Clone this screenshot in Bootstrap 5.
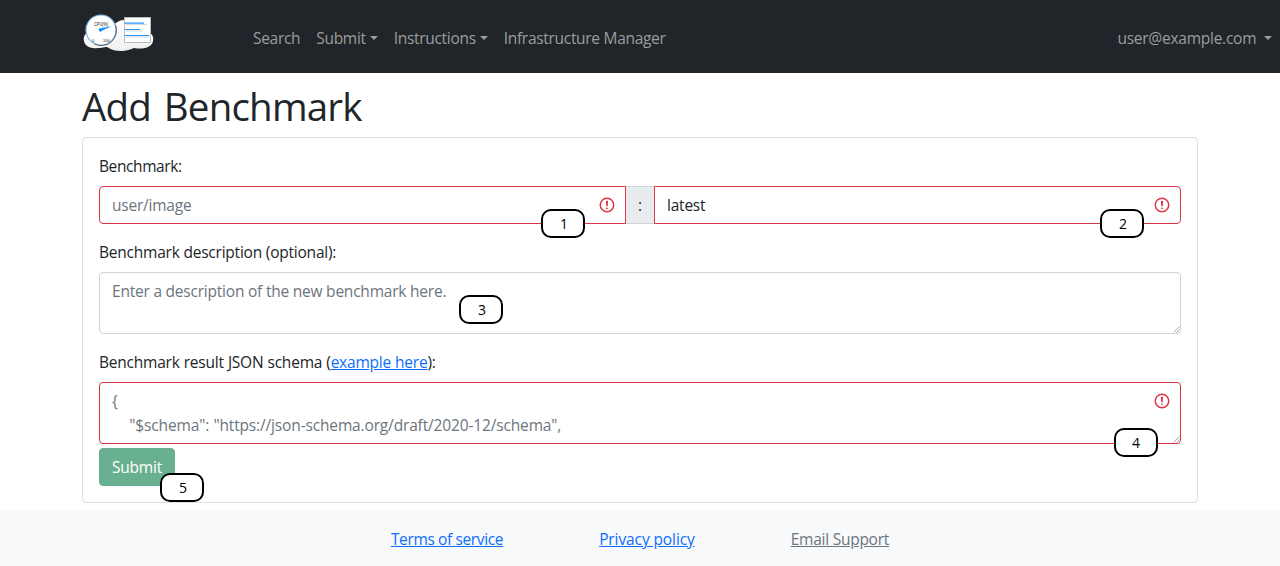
<!DOCTYPE html>
<html lang="en">
<head>
<meta charset="utf-8">
<meta name="viewport" content="width=device-width, initial-scale=1">
<title>Add Benchmark</title>
<link href="https://cdn.jsdelivr.net/npm/bootstrap@5.3.0/dist/css/bootstrap.min.css" rel="stylesheet">
<style>
  body, .form-control, .btn, .input-group-text { font-family: "Open Sans", "Noto Sans", sans-serif; font-size: 15.5px; line-height: 24px; letter-spacing: -.22px; }
  body { background: #fff; color: #212529; overflow: hidden; }
  h1 { font-size: 38.5px; line-height: 48px; font-weight: 400; letter-spacing: -.8px; word-spacing: 3.500px; padding-top: 1px; height: 48px; }
  .topbar { height: 73px; background: #212529; }
  .topbar .nav-link, .topbar .nav-link:hover { color: #9b9d9e; padding: 8px; letter-spacing: -.3px; }
  .topbar .nav-link.account { letter-spacing: -.25px; }
  .logo-box { width: 163px; }
  .logo-box svg { margin-bottom: 8px; }
  .form-control, .input-group-text, .btn, .card { border-radius: 4px; }
  .form-control { border-color: #ced4da; }
  .form-control::placeholder { color: #6c757d; }
  .form-control.is-invalid { background-size: 18px 18px; background-position: right 9px center; }
  textarea.form-control { height: 62px; min-height: 62px; overflow: hidden; resize: none; }
  textarea.form-control.is-invalid { background-position: top 9px right 9px; letter-spacing: -.15px; word-spacing: .45px; }
  .grip { position: absolute; right: 1px; bottom: 1px; }
  .input-group-text { background: #e9ecef; border-color: #ced4da; width: 30px; justify-content: center; padding: 0; }
  .tag-input { flex-grow: 1; border-top-right-radius: 4px !important; border-bottom-right-radius: 4px !important; }
  .card { border-color: #dfdfdf; }
  label[for="image"] { letter-spacing: -.4px; }
  label[for="schema"] { word-spacing: .3px; }
  a { color: #0d6efd; }
  .btn-success:disabled { background: #69b090; border-color: #69b090; opacity: 1; color: #fff; width: 76px; padding-left: 0; padding-right: 0; }
  .marker { position: absolute; z-index: 10; width: 44px; height: 29px; border: 2px solid #000; border-radius: 10px; background: #fff; color: #000; font: 14px/25px "Open Sans", sans-serif; text-align: center; padding-left: 2px; }
  .m1 { left: 442px; top: 23px; }
  .m2 { right: 37px; top: 23px; }
  .m3 { left: 360px; top: 23px; }
  .m4 { right: 23px; top: 46px; padding-left: 0; }
  .m5 { left: 61px; top: 25px; }
  .pagefoot { background: #f8f9fa; height: 55px; gap: 96px; padding-top: 16px; }
  .pagefoot a { letter-spacing: -.3px; }
  .pagefoot a:first-child { letter-spacing: -.37px; }
  .pagefoot a:nth-child(2) { letter-spacing: -.1px; }
  .pagefoot a.muted { color: #6c757d; letter-spacing: -.25px; }
</style>
</head>
<body>
<nav class="topbar d-flex align-items-center">
  <div class="container d-flex align-items-center m-0 pe-0 flex-grow-1 mw-100" style="padding-left:82px">
    <div class="logo-box flex-shrink-0">
      <svg class="d-block" width="73" height="42" viewBox="0 0 73 42">
        <defs>
          <linearGradient id="cloud" x1="0" y1="0" x2="0" y2="1"><stop offset="0" stop-color="#fff"/><stop offset="1" stop-color="#f1f1f1"/></linearGradient>
        </defs>
        <path d="M7 20C3 21 1 25 2 29c1 5 6 8 14 7 5 0 6-1 9-1 5 3 9 4 14 4 5 0 10-2 13-3 10 2 18-1 19-7 1-4-1-7-3-8V8H42c-4 0-8 2-10 5z" fill="url(#cloud)"/>
        <circle cx="19" cy="18" r="15" fill="#fff" stroke="#82b4e6" stroke-width="1.200"/>
        <path d="M33.500 13a15.200 15.200 0 0 1-21 19" fill="none" stroke="#444" stroke-width=".8"/>
        <text x="12" y="13.500" font-family="Liberation Sans" font-size="4.500" letter-spacing="0" textLength="14" lengthAdjust="spacingAndGlyphs" fill="#222">CPU[%]</text>
        <text x="10" y="30" font-family="Liberation Sans" font-size="4" letter-spacing="0" fill="#222">0</text>
        <text x="21" y="30" font-family="Liberation Sans" font-size="4" letter-spacing="0" fill="#222">100</text>
        <path d="M29.500 14.300l-11 1.900a1.700 1.700 0 1 0 1.400 2.500z" fill="#1690ff"/>
        <path d="M42.500 5.500h26v25h-26z" fill="#fff" stroke="#bbb"/>
        <g stroke-width="1.200"><path d="M44 12.500h21M44 19h17M44 25h25" stroke="#d8d8d8"/><path d="M42.500 11.200H62M42.500 17.500H58M42.500 23.500H67" stroke="#2597f7"/></g>
      </svg>
    </div>
    <div class="nav flex-nowrap w-100" id="mainNav" style="margin-top:2px">
      <a class="nav-link" href="#">Search</a>
      <a class="nav-link dropdown-toggle" href="#">Submit</a>
      <a class="nav-link dropdown-toggle" href="#">Instructions</a>
      <a class="nav-link" href="#">Infrastructure Manager</a>
      <a class="nav-link dropdown-toggle account ms-auto" href="#">user@example.com </a>
    </div>
  </div>
</nav>
<main class="mx-auto" style="width:1116px">
  <h1 class="mt-2 mb-2">Add Benchmark</h1>
  <div class="card mb-2">
    <div class="card-body">
      <form>
        <div class="mb-3">
          <label class="d-block mb-2" for="image">Benchmark:</label>
          <div class="position-relative">
            <div class="input-group">
              <input id="image" class="form-control is-invalid" placeholder="user/image">
              <span class="input-group-text">:</span>
              <input class="form-control is-invalid tag-input" value="latest" aria-label="Tag">
            </div>
            <span class="marker m1">1</span>
            <span class="marker m2">2</span>
          </div>
        </div>
        <div class="mb-3">
          <label class="d-block mb-2" for="desc">Benchmark description (optional):</label>
          <div class="position-relative">
            <textarea id="desc" class="form-control d-block" rows="2" placeholder="Enter a description of the new benchmark here."></textarea>
            <svg class="grip" width="7" height="7" viewBox="0 0 7 7" stroke="#aaa"><path d="M.5 6.500l6-6M3.500 6.500l3-3"/></svg>
            <span class="marker m3">3</span>
          </div>
        </div>
        <div class="mb-1">
          <label class="d-block mb-2" for="schema">Benchmark result JSON schema (<a href="#">example here</a>):</label>
          <div class="position-relative">
            <textarea id="schema" class="form-control is-invalid d-block" rows="2" placeholder="{&#10;    &quot;$schema&quot;: &quot;https://json-schema.org/draft/2020-12/schema&quot;,"></textarea>
            <svg class="grip" width="7" height="7" viewBox="0 0 7 7" stroke="#aaa"><path d="M.5 6.500l6-6M3.500 6.500l3-3"/></svg>
            <span class="marker m4">4</span>
          </div>
        </div>
        <div class="position-relative">
          <button class="btn btn-success d-block" type="button" disabled>Submit</button>
          <span class="marker m5">5</span>
        </div>
      </form>
    </div>
  </div>
</main>
<footer class="pagefoot d-flex justify-content-center">
  <a href="#">Terms of service</a>
  <a href="#">Privacy policy</a>
  <a class="muted" href="#">Email Support</a>
</footer>
<script src="https://cdn.jsdelivr.net/npm/bootstrap@5.3.0/dist/js/bootstrap.bundle.min.js"></script>
</body>
</html>
